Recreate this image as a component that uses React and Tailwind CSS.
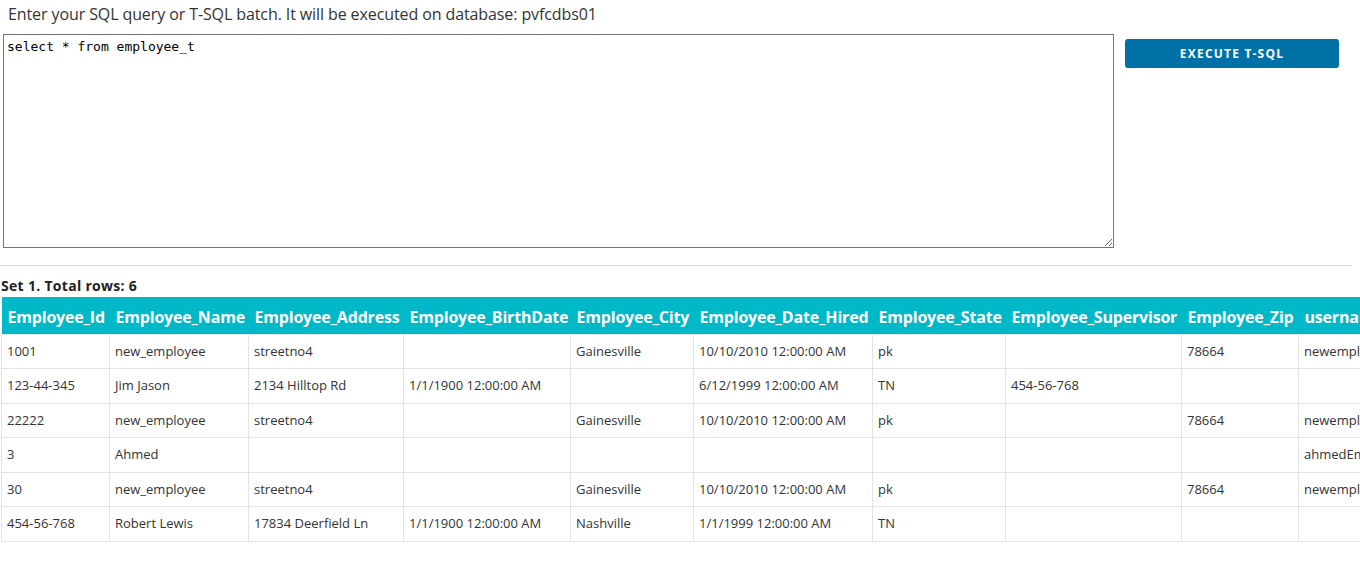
import React from "react";

const cols = [
  { name: "Employee_Id", w: 108 },
  { name: "Employee_Name", w: 139 },
  { name: "Employee_Address", w: 155 },
  { name: "Employee_BirthDate", w: 167 },
  { name: "Employee_City", w: 123 },
  { name: "Employee_Date_Hired", w: 179 },
  { name: "Employee_State", w: 133 },
  { name: "Employee_Supervisor", w: 176 },
  { name: "Employee_Zip", w: 117 },
  { name: "username", w: 130 },
  { name: "password", w: 120 },
];

const total = cols.reduce((a, c) => a + c.w, 0);

const rows = [
  ["1001", "new_employee", "streetno4", "", "Gainesville", "10/10/2010 12:00:00 AM", "pk", "", "78664", "newemployee", ""],
  ["123-44-345", "Jim Jason", "2134 Hilltop Rd", "1/1/1900 12:00:00 AM", "", "6/12/1999 12:00:00 AM", "TN", "454-56-768", "", "", ""],
  ["22222", "new_employee", "streetno4", "", "Gainesville", "10/10/2010 12:00:00 AM", "pk", "", "78664", "newemployee", ""],
  ["3", "Ahmed", "", "", "", "", "", "", "", "ahmedEmployee", ""],
  ["30", "new_employee", "streetno4", "", "Gainesville", "10/10/2010 12:00:00 AM", "pk", "", "78664", "newemployee", ""],
  ["454-56-768", "Robert Lewis", "17834 Deerfield Ln", "1/1/1900 12:00:00 AM", "Nashville", "1/1/1999 12:00:00 AM", "TN", "", "", "", ""],
];

export default function App() {
  return (
    <div
      className="w-[1360px] h-[567px] overflow-hidden bg-white text-[#333]"
      style={{ fontFamily: '"Segoe UI", "Open Sans", "Noto Sans", sans-serif' }}
    >
      <p className="pl-[8px] pt-[3px] h-[34px] text-[16px] leading-[22px] text-[#333] tracking-[-0.1px]">
        Enter your SQL query or T-SQL batch. It will be executed on database: pvfcdbs01
      </p>
      <div className="flex items-start">
        <textarea
          defaultValue="select * from employee_t"
          className="ml-[3px] w-[1111px] h-[214px] border border-[#767676] px-[3px] pt-[4px] pb-[3px] text-[13px] leading-[15px] text-black outline-none"
          style={{ fontFamily: '"DejaVu Sans Mono", "Liberation Mono", monospace', resize: "both" }}
        />
        <button className="ml-[11px] mt-[5px] w-[214px] h-[29px] pt-[1px] rounded-[3px] bg-[#0071a6] text-white text-[12px] font-bold tracking-[1.2px]">
          EXECUTE T-SQL
        </button>
      </div>
      <div className="mt-[17px] w-[1352px] h-px bg-[#dddddd]" />
      <div className="pl-[1px] pt-[11px] h-[31px] text-[14px] leading-[18px] font-bold text-[#222] tracking-[0.3px]">
        Set 1. Total rows: 6
      </div>
      <table className="ml-[1px] table-fixed border-collapse whitespace-nowrap" style={{ width: total }}>
        <colgroup>
          {cols.map((c) => (
            <col key={c.name} style={{ width: c.w }} />
          ))}
        </colgroup>
        <thead>
          <tr className="bg-[#00b9c8] h-[37px]">
            {cols.map((c) => (
              <th
                key={c.name}
                className="px-[6px] pt-[4px] pb-0 text-left text-[16px] font-bold text-white overflow-hidden tracking-[-0.2px]"
              >
                {c.name}
              </th>
            ))}
          </tr>
        </thead>
        <tbody>
          {rows.map((r, i) => (
            <tr key={i} className="h-[34.5px]">
              {r.map((v, j) => (
                <td
                  key={j}
                  className="border border-[#e3e3e3] px-[5px] text-[13px] text-[#333] overflow-hidden"
                >
                  {v}
                </td>
              ))}
            </tr>
          ))}
        </tbody>
      </table>
    </div>
  );
}
